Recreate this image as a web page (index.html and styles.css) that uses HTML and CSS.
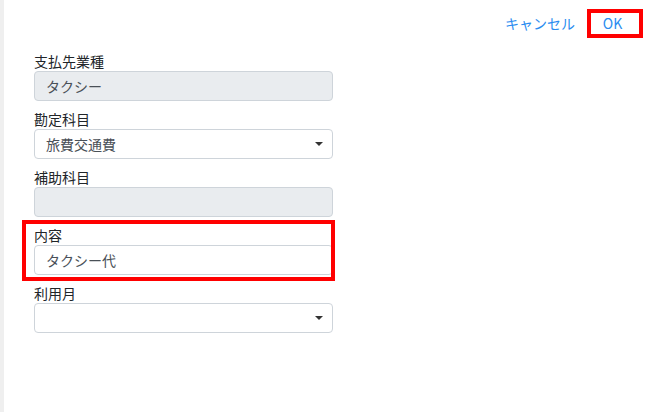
FILE: index.html
```html
<!DOCTYPE html>
<html lang="ja">
<head>
<meta charset="utf-8">
<title>編集</title>
<link rel="stylesheet" href="styles.css">
</head>
<body>
<div class="app">
  <div class="strip"></div>
  <div class="main">
    <div class="header">
      <button class="btn">キャンセル</button>
      <span class="mark-box"><button class="btn btn-ok">OK</button></span>
    </div>
    <div class="form">
      <div class="group">
        <div class="label">支払先業種</div>
        <div class="field disabled">タクシー</div>
      </div>
      <div class="group">
        <div class="label">勘定科目</div>
        <div class="field select">旅費交通費<span class="caret"></span></div>
      </div>
      <div class="group">
        <div class="label">補助科目</div>
        <div class="field disabled"></div>
      </div>
      <div class="group marked">
        <div class="label">内容</div>
        <div class="field">タクシー代</div>
        <div class="mark"></div>
      </div>
      <div class="group">
        <div class="label">利用月</div>
        <div class="field select"><span class="caret"></span></div>
      </div>
    </div>
  </div>
</div>
</body>
</html>
```
FILE: styles.css
```css
* { box-sizing: border-box; }
html, body { margin: 0; padding: 0; background: #fff; }
body {
  font-family: "Noto Sans CJK JP", "Noto Sans", sans-serif;
  font-size: 14px;
  color: #212529;
}
.app { display: flex; height: 412px; }
.strip { width: 4px; background: #efefef; flex: none; }
.main { flex: 1; }
.header {
  display: flex;
  justify-content: flex-end;
  align-items: center;
  padding: 9px 20px 0 0;
  gap: 12px;
}
.btn {
  border: 0;
  background: none;
  font: inherit;
  font-size: 14px;
  color: #2a8cf0;
  padding: 0;
  line-height: 21px;
  cursor: pointer;
}
.mark-box {
  display: flex;
  border: 4px solid #ff0000;
  width: 56px;
  height: 29px;
  align-items: center;
  justify-content: center;
  padding-right: 5px;
}
.form {
  margin: 13px 0 0 30px;
  width: 299px;
  display: flex;
  flex-direction: column;
  gap: 8px;
}
.group { position: relative; }
.label { line-height: 20px; height: 20px; }
.field {
  position: relative;
  height: 30px;
  border: 1px solid #ced4da;
  border-radius: 4px;
  padding: 0 11px;
  line-height: 28px;
  color: #495057;
  background: #fff;
}
.field.disabled { background: #e9ecef; }
.caret {
  position: absolute;
  right: 9px;
  top: 12px;
  width: 0;
  height: 0;
  border-left: 4px solid transparent;
  border-right: 4px solid transparent;
  border-top: 4px solid #333;
}
.mark {
  position: absolute;
  top: -5px;
  left: -12px;
  right: -2px;
  bottom: -6px;
  border: 4px solid #ff0000;
  pointer-events: none;
}
```
